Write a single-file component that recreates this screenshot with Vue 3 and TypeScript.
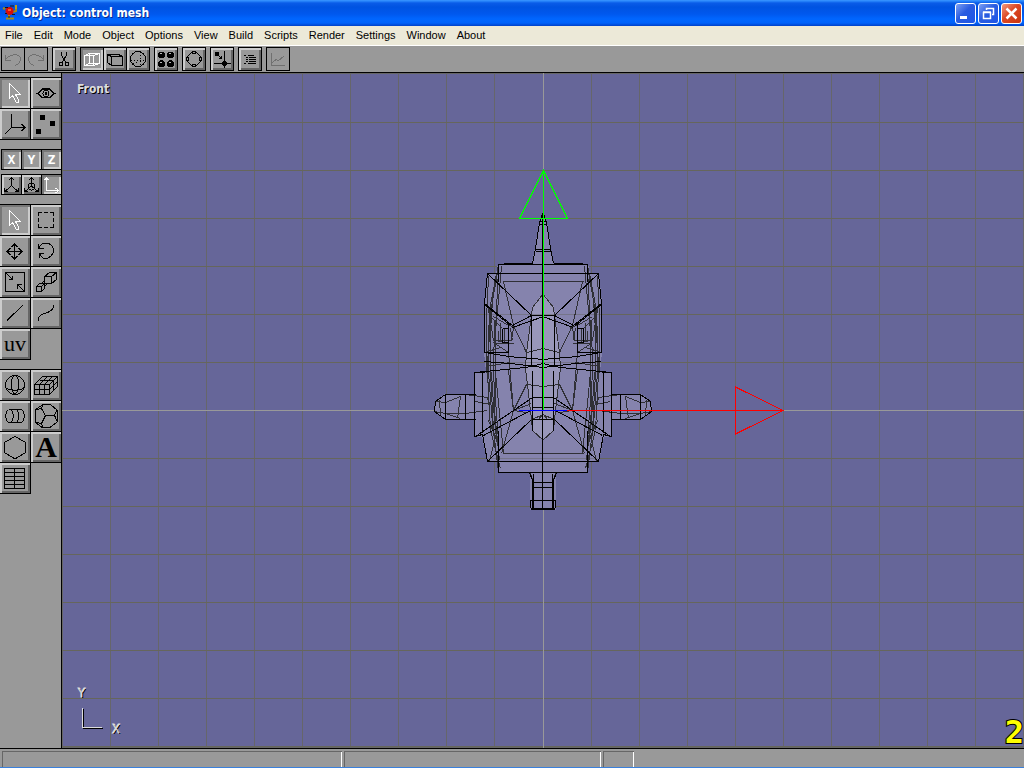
<script setup lang="ts">
interface Shape { d: string; fill?: string; light?: boolean }
interface Tool { name: string; shapes?: Shape[]; glyph?: string; kind?: string; pressed?: boolean; disabled?: boolean }

const menus: string[] = ['File', 'Edit', 'Mode', 'Object', 'Options', 'View', 'Build', 'Scripts', 'Render', 'Settings', 'Window', 'About']

const ball = (x: number, y: number, r: number): string =>
  `M${x - r} ${y}a${r} ${r} 0 1 0 ${2 * r} 0a${r} ${r} 0 1 0 ${-2 * r} 0Z`
const solid = (d: string): Shape => ({ d, fill: 'currentColor' })
const arrow = 'M9.5 5.5V20.5L12.5 17.5L16.500 24.500H18.500V22L15.500 16.500H20.500Z'

const toolbar: Tool[][] = [
  [
    { name: 'Undo', disabled: true, shapes: [{ d: 'M4.500 8V13.500H10M4.500 13C8 7 17 6 19.500 11C20 15 18 17 14 18.500' }] },
    { name: 'Redo', disabled: true, shapes: [{ d: 'M19.500 8V13.500H14M19.500 13C16 7 7 6 4.500 11C4 15 6 17 10 18.500' }] },
  ],
  [{ name: 'Cut', shapes: [{ d: 'M9.500 5V8L13.500 15M14.500 5V8L10.500 15' }, { d: ball(9, 17, 2) + ball(15, 17, 2) }] }],
  [
    { name: 'Wireframe', pressed: true, shapes: [{ d: 'M4.500 8.500H13.500V18.500H4.500ZM9.500 6.500H19.500V16.500H9.500ZM4.500 8.500L9.500 6.500M13.500 8.500L19.500 6.500M4.500 18.500L9.500 16.500M13.500 18.500L19.500 16.500' }] },
    { name: 'Flat', shapes: [{ d: 'M8.500 9.500H19.500V18.500H8.500ZM4.500 7.500H15.500L19.500 9.500M4.500 7.500L8.500 9.500M4.500 7.500V15.500L8.500 18.500' }] },
    { name: 'Smooth', shapes: [{ d: ball(12, 12, 7.5) }, { d: 'M14.500 5V6M14.500 8V9M14.500 11V12M14.500 14V15M14.500 17V18M5 13.500H6M8 13.500H9M11 13.500H12M14 13.500H15M17 13.500H18M10 15.500H11M7 16.500H8' }] },
  ],
  [{ name: 'Materials', shapes: [solid(ball(7.5, 8, 3) + ball(16.5, 8, 3) + ball(7.5, 16.5, 3) + ball(16.5, 16.5, 3)), { d: 'M6 6.500H8M15 6.500H17M6 15.500H8M15 15.500H17', light: true }] }],
  [{ name: 'Select ring', shapes: [{ d: 'M9.500 5.500H14.500L18.500 9.500V14.500L14.500 18.500H9.500L5.500 14.500V9.500Z' }, { d: 'M10.500 4.500h3v2h-3ZM10.500 17.500h3v2h-3ZM4.500 10.500h2v3h-2ZM17.500 10.500h2v3h-2Z', fill: '#999' }] }],
  [{ name: 'Snap', shapes: [solid(ball(7, 7, 2) + ball(14.5, 16.5, 2)), { d: 'M7 7L11.500 11.500M8.500 11.500H11.500V8.500M14.500 4V21M4 16.500H21' }] }],
  [{ name: 'Outliner', shapes: [{ d: 'M6 8.500H8M10 8.500H16M8 10.500H10M11 10.500H18M8 12.500H10M11 12.500H18M8 14.500H10M11 14.500H18M6 16.500H8M10 16.500H18' }] }],
  [{ name: 'Graph', disabled: true, shapes: [{ d: 'M5.500 6V18.500H19M6 16L10 12.500L12 14L18 9' }] }],
]

const modes: Tool[] = [
  { name: 'Object mode', pressed: true, shapes: [{ d: arrow }] },
  { name: 'View', shapes: [{ d: 'M5 15.500H7L11 11.500H19L23 15.500H25M7 15.500L11 19.500H19L23 15.500M9 12.500L12 10.500H18L21 12.500' }, { d: ball(15, 15.5, 3) }, solid('M14.500 14.500h1v2h-1Z')] },
  { name: 'Axes', shapes: [{ d: 'M11.500 5V18.500H25M21.500 15L25 18.500L21.500 22M11.500 18.500L5 25' }] },
  { name: 'Points', shapes: [solid('M9.500 6.500h4v4h-4ZM19.500 12.500h4v4h-4ZM5.500 20.500h4v4h-4Z')] },
]
const axes: Tool[] = ['X', 'Y', 'Z'].map((a): Tool => ({ name: a, glyph: a, kind: 'axis', pressed: true }))
const spaces: Tool[] = [
  { name: 'World axes', shapes: [{ d: 'M9.500 3V10.500L3 16.500M9.500 10.500L16 16.500M6.500 5.500L9.500 2.500L12.500 5.500M2.500 13V16.500H6M16.500 13V16.500H13' }] },
  { name: 'Local axes', shapes: [{ d: 'M9.500 3V11M6.500 5.500L9.500 2.500L12.500 5.500M9.500 11L3 16.500M9.500 11L16 16.500M2.500 13V16.500H6M16.500 13V16.500H13M6.500 9.500L9.500 7.500L12.500 9.500V13.500L9.500 15.500L6.500 13.500Z' }] },
  { name: 'Screen axes', pressed: true, shapes: [{ d: 'M4.500 3V15.500H16M2.500 5L4.500 2.500L6.500 5M13.500 13L16.500 15.500L13.500 18' }] },
]
const edits: Tool[] = [
  { name: 'Select', pressed: true, shapes: [{ d: arrow }] },
  { name: 'Area select', shapes: [{ d: 'M7.500 11V7.500H11M13 7.500H17M19 7.500H22.500V11M22.500 13V17M22.500 19V22.500H19M17 22.500H13M11 22.500H7.500V19M7.500 17V13' }] },
  { name: 'Move', shapes: [{ d: 'M14.500 8V23M7 15.500H22M11.500 11L14.500 8L17.500 11M11.500 20L14.500 23L17.500 20M10.500 12L7 15.500L10.500 19M18.500 12L22 15.500L18.500 19' }] },
  { name: 'Rotate', shapes: [{ d: 'M8 12C10 6 19 5 22 12C24 18 18 24 12 22M12 22L8.500 18M7.500 7.500V12.500H12.500M8.500 22V17.500H13' }] },
  { name: 'Scale', shapes: [{ d: 'M5.500 5.500H24.500V24.500H5.500ZM6 6L12.500 12.500M8.500 12.500H12.500V8.500M24 24L17.500 17.500M17.500 21.500V17.500H21.500' }] },
  { name: 'Extrude', shapes: [{ d: 'M5.500 19.500H10.500V24.500H5.500ZM5.500 19.500L8.500 16.500H13.500L10.500 19.500M13.500 16.500V21.500L10.500 24.500M13.500 9.500H20.500V16.500H13.500ZM13.500 9.500L18.500 5.500H25.500L20.500 9.500M25.500 5.500V12.500L20.500 16.500M10.500 16.500L13.500 13.500M13.500 19.500L16.500 16.500' }] },
  { name: 'Line', shapes: [{ d: 'M7 22.500L23 7' }] },
  { name: 'Curve', shapes: [{ d: 'M7.500 23V20C9 14 20 17 22.500 9V7' }] },
  { name: 'UV map', glyph: 'uv', kind: 'uv' },
]
const solids: Tool[] = [
  { name: 'Sphere', shapes: [{ d: ball(15, 15, 9.5) + 'M15 5.500C10 8 10 20 15 24.500C20 20 20 8 15 5.500M6 18C10 21 20 21 24 18' }] },
  { name: 'Cube', shapes: [{ d: 'M3.500 14.500H18.500V24.500H3.500ZM8.500 14.500V24.500M13.500 14.500V24.500M3.500 19.500H18.500M3.500 14.500L11.500 6.500H26.500L18.500 14.500M8.500 14.500L16.500 6.500M13.500 14.500L21.500 6.500M8.500 10.500H22.500V20.500M26.500 6.500V16.500L18.500 24.500M18.500 19.500L26.500 11.500' }] },
  { name: 'Cylinder', shapes: [{ d: 'M8.500 8.500H21.500C25 10 25 20 21.500 21.500H8.500C5 20 5 10 8.500 8.500M10.500 8.500C14 10 14 20 10.500 21.500M16 8.500C19.500 10 19.500 20 16 21.500' }] },
  { name: 'Polyhedron', shapes: [{ d: 'M12 3.500L19.500 3.500L26 9V21L19 26.500H11L4 21V9ZM12 3.500L10.500 7.500L4 9M10.500 7.500L14.500 14.500H23.500L26 9M23.500 14.500L26 20M14.500 14.500L10.500 22.500L12 26.500M10.500 22.500L4 21' }] },
  { name: 'Polygon', shapes: [{ d: 'M15 4.500L25.500 10.500V20.500L15 27L4.500 20.500V10.500Z' }] },
  { name: 'Text', glyph: 'A', kind: 'letter' },
  { name: 'Table', shapes: [{ d: 'M4.500 5.500H24.500V25.500H4.500ZM14.500 5.500V25.500M4.500 9.500H24.500M4.500 13.500H24.500M4.500 17.500H24.500M4.500 21.500H24.500' }] },
]
const panels = [
  { id: 'modes', size: 30, small: false, tools: modes },
  { id: 'axes', size: 19, small: true, tools: axes },
  { id: 'spaces', size: 19, small: true, tools: spaces },
  { id: 'edits', size: 30, small: false, tools: edits },
  { id: 'solids', size: 30, small: false, tools: solids },
]

const gridX: number[] = [...Array(9).keys()].map(i => 110 + 48 * i).concat([...Array(40).keys()].map(i => 591 + 48 * i))
const gridY: number[] = [...Array(40).keys()].map(i => 122 + 48 * i).filter(y => y !== 410)

/* one half of the symmetric mesh; the other half is its mirror about x = 543 */
const silhouette = [
  'M543 213L539 222L535 248L532 263L498 264L496 273H487L484 303V352L486 372H474V436L482 437L487 461H498V472H543Z',
  'M475 394H445L435 401L434 411L445 419H475Z',
  'M530 472V510H543V472Z',
]
const lighter = [
  'M543 293L532 307L531 315L526 352L525 368L527 384L531 419L532 430L543 440Z',
]
const edges = [
  'M542 213L539 222L535 248L532 263M498 281V264H543M539 224H543M539 221H543M535 249H543M535 251H543',
  'M487 273H543M487 461H543M498 472H543M503 263H532',
  'M487 273L484 303V352M484 372H474V436L482 434L487 461',
  'M487 273L531 315H543M484 303L512 325L531 315V365M484 304L510 325M512 327L543 316M508 323V352H484M502 328H508M502 328V342H508',
  'M484 352L508 356L543 359M474 372L525 367L543 363M484 361L510 363L543 367M482 372V432',
  'M498 430V472H507',
  'M532 370V430M532 397H543M532 407H543M531 419H543',
  'M532 397L513 410L475 436M530 410L483 435M531 419L487 461',
  'M475 394H445L435 401L434 411L445 419H475M445 394V419M465 394V419',
  'M529 472L532 480V509H543M533 482H543M533 487H543M530 500H543M530 499V507L532 510M532 508H543M533 473V508',
]
const softEdges = [
  'M498 264L492 300L490 330V372L493 430L498 472M498 268L495 330V400L498 440M496 273L489 310L487 372L490 430L500 468M501 266L497 310L493 352L494 410L499 460',
  'M498 266L490 312L488 352V372L492 424L497 462M488 276L486 318V372M491 372L494 420L497 446',
  'M502 281H543M503 281L513 325L526 352L543 348M502 453H543M501 453L513 410L508 352',
  'M543 293L532 307L531 315L526 352L525 368L527 384L531 419L532 430L543 440',
  'M508 370L513 410L531 403M526 384L543 386M526 384L513 410L526 412M531 419L543 414L547 419',
  'M487 303L493 340H511L513 327M492 318L502 328M493 342L508 352M495 343H513M498 330V341H502M490 310V350',
  'M504 328V343M500 322V341M493 316L508 325M494 320V346M510 328L512 340M506 324L515 327',
  'M465 394L487 397L489 405M435 401L445 402L460 396L457 418M434 411L445 413H465L487 410M439 400L440 415M445 413L460 418M475 401L490 404',
  'M484 352L500 347M486 366L510 362M488 420L495 436L489 461M495 372L503 453M530 473L533 482',
]
</script>

<template>
  <div class="window">
    <header class="title">
      <svg class="logo" viewBox="0 0 16 16" aria-hidden="true">
        <path d="M7 10V14M4 14.500H12M11 8L14 7V1M3 5L1 4" fill="none" stroke="#a98a10" stroke-width="2" />
        <circle cx="7.500" cy="7" r="4" fill="#d80c08" />
        <path d="M3 3.500H6M8 2H12M3 9.500H5M10 10.500H13M6 13H8" stroke="#181818" stroke-width="1" />
        <path d="M6 5H9V7H6Z" fill="#ff5a20" />
        <path d="M14 1V5" stroke="#e0b010" />
      </svg>
      <h1>Object: control mesh</h1>
      <div class="winbtns">
        <button aria-label="Minimize"><svg viewBox="0 0 21 21"><path d="M5 14.500H12" stroke="#fff" stroke-width="3" /></svg></button>
        <button aria-label="Restore"><svg viewBox="0 0 21 21"><path d="M5.500 9.500H12.500V15.500H5.500ZM5 9H13" fill="none" stroke="#fff" stroke-width="1.500" /><path d="M8.500 7V5.500H15.500V11.500H14" fill="none" stroke="#fff" stroke-width="1.500" /></svg></button>
        <button class="close" aria-label="Close"><svg viewBox="0 0 21 21"><path d="M5.500 5.500L15.500 15.500M15.500 5.500L5.500 15.500" stroke="#fff" stroke-width="2.500" /></svg></button>
      </div>
    </header>

    <nav class="menu">
      <button v-for="m in menus" :key="m">{{ m }}</button>
    </nav>

    <div class="toolbar">
      <div v-for="(group, i) in toolbar" :key="i" class="group">
        <button v-for="t in group" :key="t.name" class="tool" :class="{ pressed: t.pressed }" :disabled="t.disabled" :aria-label="t.name">
          <svg viewBox="1 1 22 22"><path v-for="(s, k) in t.shapes" :key="k" :d="s.d" :fill="s.fill ?? 'none'" :stroke="s.light ? '#bbb' : 'currentColor'" /></svg>
        </button>
      </div>
    </div>

    <main>
      <aside>
        <div v-for="p in panels" :key="p.id" class="panel" :class="[p.id, { small: p.small }]">
          <button v-for="t in p.tools" :key="t.name" class="tool" :class="[t.kind, { pressed: t.pressed }]" :aria-label="t.name">
            <template v-if="t.glyph">{{ t.glyph }}</template>
            <svg v-else :viewBox="`0 0 ${p.size} ${p.size}`"><path v-for="(s, k) in t.shapes" :key="k" :d="s.d" :fill="s.fill ?? 'none'" :stroke="s.light ? '#bbb' : 'currentColor'" /></svg>
          </button>
        </div>
      </aside>

      <section class="viewport">
        <svg class="scene" viewBox="62 73 962 675" preserveAspectRatio="xMinYMin slice">
          <defs>
            <g id="half">
              <path v-for="d in silhouette" :key="d" :d="d" fill="#8583ad" />
              <path v-for="d in lighter" :key="d" :d="d" fill="#9997ba" />
            </g>
            <g id="wires" fill="none" transform="translate(0.5 0.5)">
              <path v-for="d in softEdges" :key="d" :d="d" stroke="#303036" />
              <path v-for="d in edges" :key="d" :d="d" stroke="#000" />
            </g>
          </defs>
          <g shape-rendering="crispEdges">
            <rect v-for="x in gridX" :key="'x' + x" :x="x" y="73" width="1" height="675" fill="#66666a" />
            <rect v-for="y in gridY" :key="'y' + y" x="62" :y="y" width="962" height="1" fill="#66665c" />
            <rect x="62" y="410" width="962" height="1" fill="#999" />
            <rect x="543" y="73" width="1" height="675" fill="#999" />
          </g>
          <g shape-rendering="crispEdges">
            <use href="#half" /><use href="#half" transform="translate(1086 0) scale(-1 1)" />
          </g>
          <g opacity="0.500" fill="#666">
            <rect x="485" y="314" width="117" height="1" /><rect x="485" y="362" width="117" height="1" /><rect x="488" y="458" width="110" height="1" />
          </g>
          <g shape-rendering="crispEdges">
            <use href="#wires" /><use href="#wires" transform="translate(1086 0) scale(-1 1)" />
            <path d="M542.500 213V510" stroke="#000" />
            <path d="M543.500 170V410M519.500 218.500H567.500L543.500 170.500Z" fill="none" stroke="#0f0" />
            <path d="M567 410.500H783M735.500 387L783 410.500L735.500 434Z" fill="none" stroke="#f00" />
            <path d="M519 410.500H567" stroke="#00f" />
          </g>
        </svg>
        <span class="view-name">Front</span>
        <div class="gizmo">
          <span class="gy">Y</span>
          <div class="corner"></div>
          <span class="gx">X</span>
        </div>
        <output class="counter">2</output>
      </section>
    </main>

    <footer><div class="cell wide"></div><div class="cell mid"></div><div class="cell short"></div></footer>
  </div>
</template>

<style>
body { margin: 0; }
</style>

<style scoped>
* { box-sizing: border-box; }
.window { height: 100vh; display: flex; flex-direction: column; overflow: hidden; background: #999; border-bottom: 1px solid #3a80dc; font-family: "Liberation Sans", sans-serif; }
button { margin: 0; padding: 0; border: 0; background: none; color: #000; font: inherit; }
svg { display: block; }

.title { flex: none; height: 26px; display: flex; align-items: center; padding: 0 2px; background: linear-gradient(#3c96ff 0, #2a88fc 1px, #0a5ce8 3px, #0053e1 7px, #0058ee 14px, #0066ff 19px, #0062fa 23px, #0040c8 26px); }
.logo { width: 16px; height: 16px; margin-top: -2px; }
h1 { flex: 1; margin: 0 0 0 4px; color: #fff; font: bold 12px/24px "DejaVu Sans Condensed", "DejaVu Sans", sans-serif; text-shadow: 1px 1px #0a2a90; }
.winbtns { display: flex; gap: 2px; }
.winbtns button { width: 21px; height: 21px; border: 1px solid #fff; border-radius: 3px; background: linear-gradient(135deg, #7da0f4, #2a5ce0 45%, #1d56e8); }
.winbtns svg { width: 21px; height: 21px; margin: -1px; }
.winbtns .close { background: linear-gradient(135deg, #f09a80, #dc4824 45%, #c83410); }

.menu { flex: none; height: 20px; display: flex; gap: 11px; padding: 0 5px; background: #ece9d8; border-bottom: 1px solid #fff; font-size: 11px; line-height: 17px; }

.toolbar { flex: none; height: 27px; display: flex; gap: 4px; padding: 1px; border-bottom: 1px solid #000; }
.group { display: flex; }
.toolbar .tool { width: 24px; height: 24px; border: 1px solid #000; }
.toolbar .tool + .tool { margin-left: -1px; }
.tool { background: #999; box-shadow: inset 2px 2px #ccc, inset -2px -2px #666; }
.tool.pressed { color: #fff; box-shadow: inset 2px 2px #777, inset -2px -2px #ccc; }
.tool:disabled { color: #707070; box-shadow: none; }
.tool svg { width: 100%; height: 100%; shape-rendering: crispEdges; }

main { flex: 1; min-height: 0; display: flex; border-bottom: 1px solid #000; }
aside { flex: none; width: 62px; padding-top: 4px; box-shadow: inset -1px 0 #000; }
.panel { display: grid; grid-template-columns: 31px 31px; border-top: 1px solid #000; margin-bottom: 9px; }
.panel .tool { height: 31px; border: solid #000; border-width: 0 1px 1px 0; }
.panel.small { grid-template-columns: 20px 20px 20px; margin-left: 1px; border-left: 1px solid #000; }
.panel.small .tool { height: 20px; }
.panel.axes { margin-bottom: 4px; }
.tool.axis { font: bold 13px/18px "DejaVu Sans Mono", monospace; }
.tool.uv { font: 22px/26px "Liberation Serif", serif; }
.tool.letter { font: bold 30px/28px "Liberation Serif", serif; }

.viewport { position: relative; flex: 1; min-width: 0; background: #666699; box-shadow: inset 0 0 0 1px #666; }
.scene { width: 100%; height: 100%; }
.view-name, .gizmo span { color: #ddd; text-shadow: 1px 1px #000; font: bold 12px/14px "DejaVu Sans Condensed", "DejaVu Sans", sans-serif; }
.view-name { position: absolute; left: 15px; top: 9px; }
.gizmo { position: absolute; left: 16px; bottom: 12px; display: grid; grid-template-columns: 34px 12px; grid-template-rows: 22px 28px; }
.gizmo span { font-size: 13px; font-weight: normal; -webkit-text-stroke: 1px #ddd; paint-order: stroke; }
.gizmo .corner { grid-area: 2 / 1; width: 20px; height: 20px; margin: 0 0 0 4px; border: solid #ddd; border-width: 0 0 1px 1px; filter: drop-shadow(1px 1px 0 #000); }
.gizmo .gx { grid-area: 2 / 2; align-self: end; }
.counter { position: absolute; right: 0; bottom: -3px; color: #ff0; font: bold 32px/38px "DejaVu Sans Mono", monospace; -webkit-text-stroke: 2px #000; paint-order: stroke fill; }

footer { flex: none; height: 18px; display: flex; gap: 2px; padding: 2px 2px 0; }
.cell { border: solid #666; border-width: 1px 0 0 1px; box-shadow: inset -1px 0 #fff; }
.wide { width: 33.3%; }
.mid { width: 25.2%; }
.short { width: 31px; }
</style>
